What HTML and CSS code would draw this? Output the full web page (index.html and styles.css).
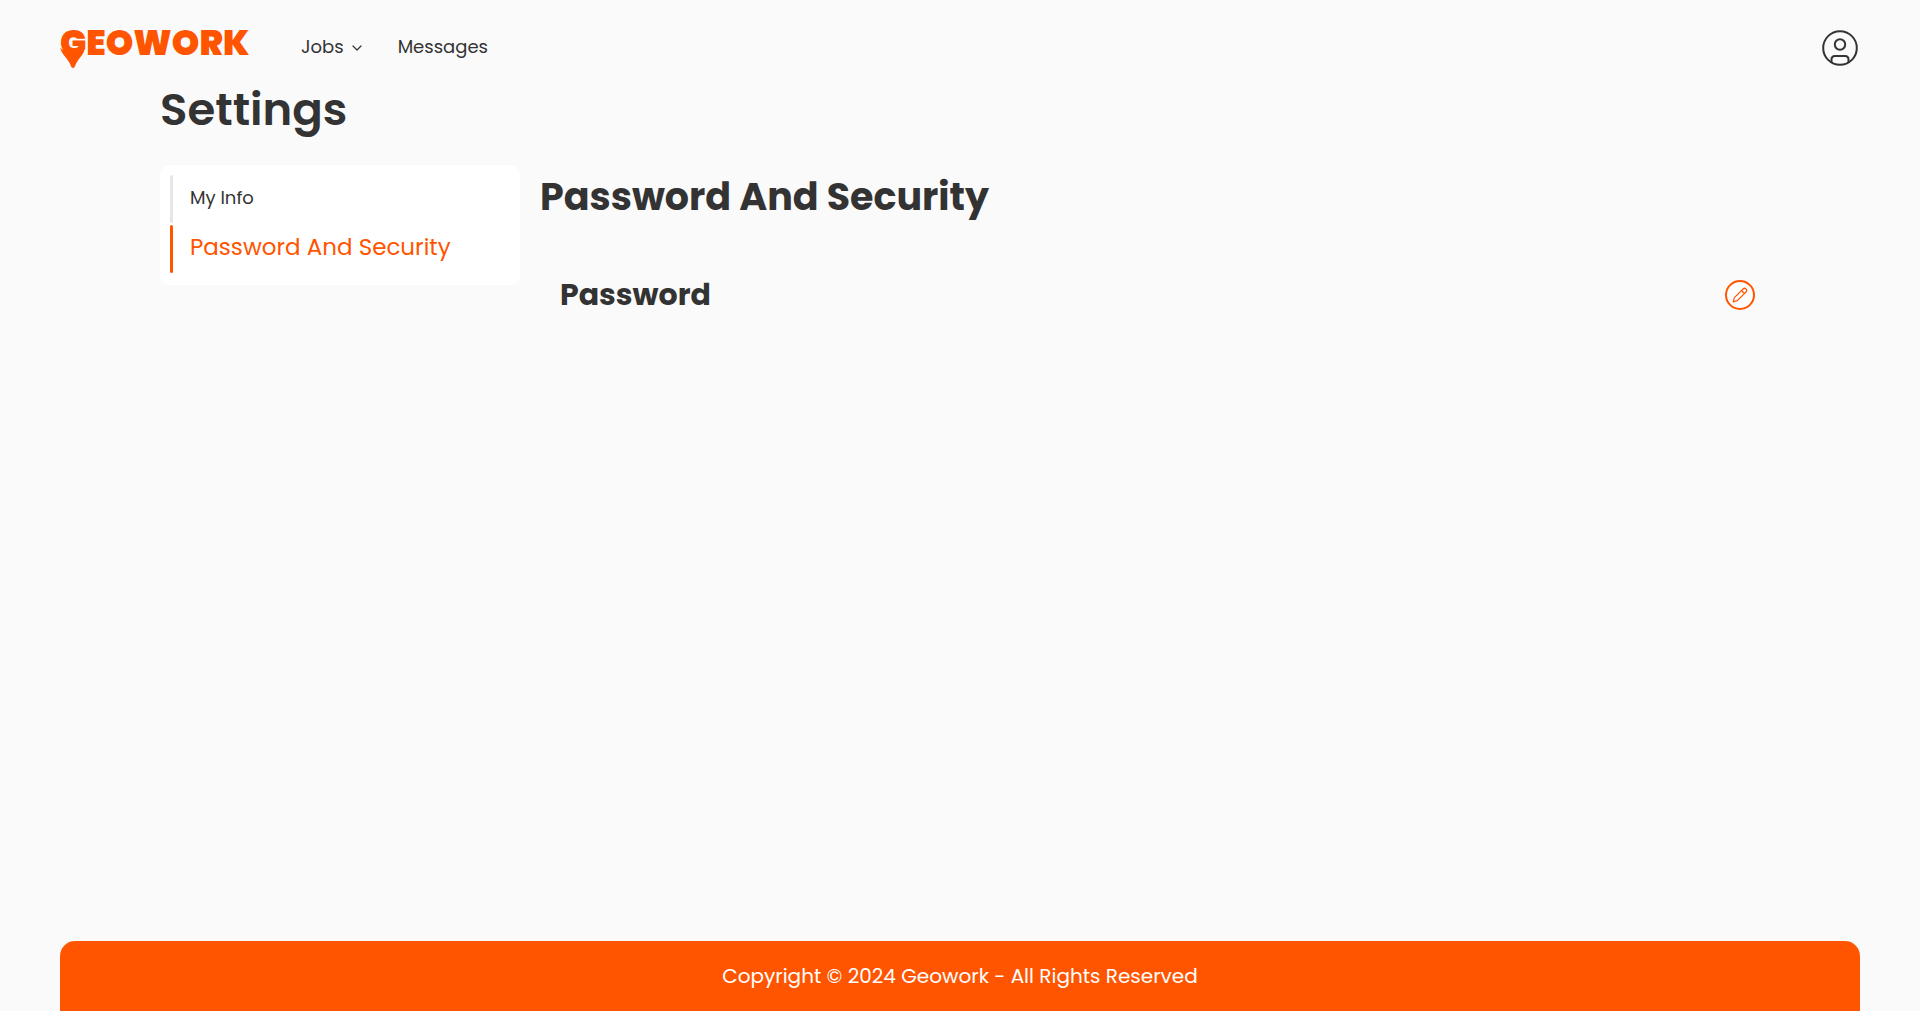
FILE: index.html
```html
<!DOCTYPE html>
<html lang="en">
<head>
<meta charset="utf-8">
<meta name="viewport" content="width=device-width, initial-scale=1">
<title>Geowork - Settings</title>
<link rel="stylesheet" href="styles.css">
</head>
<body>
<header class="header">
  <a class="logo" href="#">
    <span class="logo-text">GEOWORK</span>
    <svg class="logo-pin" viewBox="0 0 25 20" aria-hidden="true"><path d="M0 0C2 6 6 9 9 14C11 17 11 20 13 20C15 20 15 17 17 14C20 9 24 6 25 0C20 5 6 5 0 0Z" fill="currentColor"/></svg>
  </a>
  <nav class="nav">
    <button class="nav-item" type="button">Jobs
      <svg class="chevron" viewBox="0 0 10 6" aria-hidden="true"><path d="M1 1L5 5L9 1" fill="none" stroke="currentColor" stroke-width="1.2" stroke-linecap="round" stroke-linejoin="round"/></svg>
    </button>
    <a class="nav-item" href="#">Messages</a>
  </nav>
  <button class="profile" type="button" aria-label="Profile">
    <svg viewBox="0 0 36 36" aria-hidden="true"><g fill="none" stroke="currentColor" stroke-width="2"><circle cx="18" cy="18" r="16.8"/><circle cx="18" cy="14.5" r="5.2"/><path d="M9.500 32V29.500Q9.500 26 13 26H23Q26.500 26 26.500 29.500V32"/></g></svg>
  </button>
</header>
<main class="page">
  <h1 class="page-title">Settings</h1>
  <div class="columns">
    <nav class="sidebar">
      <a class="side-link" href="#">My Info</a>
      <a class="side-link active" href="#" aria-current="page">Password And Security</a>
    </nav>
    <section class="content">
      <h2 class="content-title">Password And Security</h2>
      <div class="row">
        <h3 class="row-title">Password</h3>
        <button class="edit" type="button" aria-label="Edit password">
          <svg viewBox="0 0 16 16" aria-hidden="true"><g fill="none" stroke="currentColor" stroke-width="1.200" stroke-linejoin="round"><path d="M1.200 14.800L2.400 10.700L11 2Q12.500 .500 14 2Q15.500 3.500 14 5L5.300 13.600Z"/><path d="M10 3.500Q10.500 5.500 12.500 6"/></g></svg>
        </button>
      </div>
    </section>
  </div>
</main>
<footer class="footer">Copyright © 2024 Geowork - All Rights Reserved</footer>
</body>
</html>
```
FILE: styles.css
```css
* { box-sizing: border-box; }
body {
  margin: 0;
  min-height: 100vh;
  display: flex;
  flex-direction: column;
  background: #fafafa;
  color: #333;
  font-family: Poppins, Inter, sans-serif;
  font-size: 18px;
}
h1, h2, h3 { margin: 0; }
a { color: inherit; text-decoration: none; }
button { padding: 0; border: 0; background: none; color: inherit; font: inherit; cursor: pointer; }
svg { display: block; }

.header { display: flex; align-items: center; height: 80px; padding: 14px 62px 0 60px; }
.logo { position: relative; width: 186px; color: #f50; }
.logo-text { display: block; font-weight: 900; font-size: 35px; line-height: 40px; margin-bottom: 8px; }
.logo-pin { position: absolute; left: 0; top: 25px; width: 25px; height: 20px; }
.nav { display: flex; gap: 36px; margin-left: 55px; }
.nav-item { display: flex; align-items: center; gap: 8px; line-height: 28px; }
.chevron { width: 10px; height: 6px; margin-top: 2px; }
.profile { width: 36px; height: 36px; margin: 2px 0 0 auto; }

.page { flex: 1; padding: 0 160px; }
.page-title { font-size: 45px; font-weight: 600; line-height: 60px; }
.columns { display: flex; align-items: flex-start; gap: 20px; margin-top: 25px; }
.sidebar { display: flex; flex-direction: column; gap: 2px; flex: 0 0 360px; padding: 10px 10px 12px; border-radius: 10px; background: #fff; }
.side-link { position: relative; padding-left: 20px; line-height: 45px; height: 48px; }
.side-link::before { content: ""; position: absolute; left: 0; top: 0; bottom: 0; width: 3px; border-radius: 2px; background: #e6e6e6; }
.side-link.active { color: #f50; font-size: 23px; }
.side-link.active::before { background: #f50; }
.content { flex: 1; padding-right: 5px; }
.content-title { font-size: 38px; font-weight: 700; line-height: 64px; }
.row { display: flex; align-items: center; justify-content: space-between; margin-top: 44px; padding-left: 20px; }
.row-title { font-size: 30px; font-weight: 700; line-height: 44px; }
.edit { display: flex; align-items: center; justify-content: center; width: 30px; height: 30px; border: 2px solid #f50; border-radius: 50%; background: #fff; color: #f50; }
.edit svg { width: 16px; height: 16px; }

.footer { margin: 0 60px; padding: 20px 20px 19px; border-radius: 15px 15px 0 0; background: #f50; color: #fff; font-size: 20px; line-height: 31px; text-align: center; }
```
